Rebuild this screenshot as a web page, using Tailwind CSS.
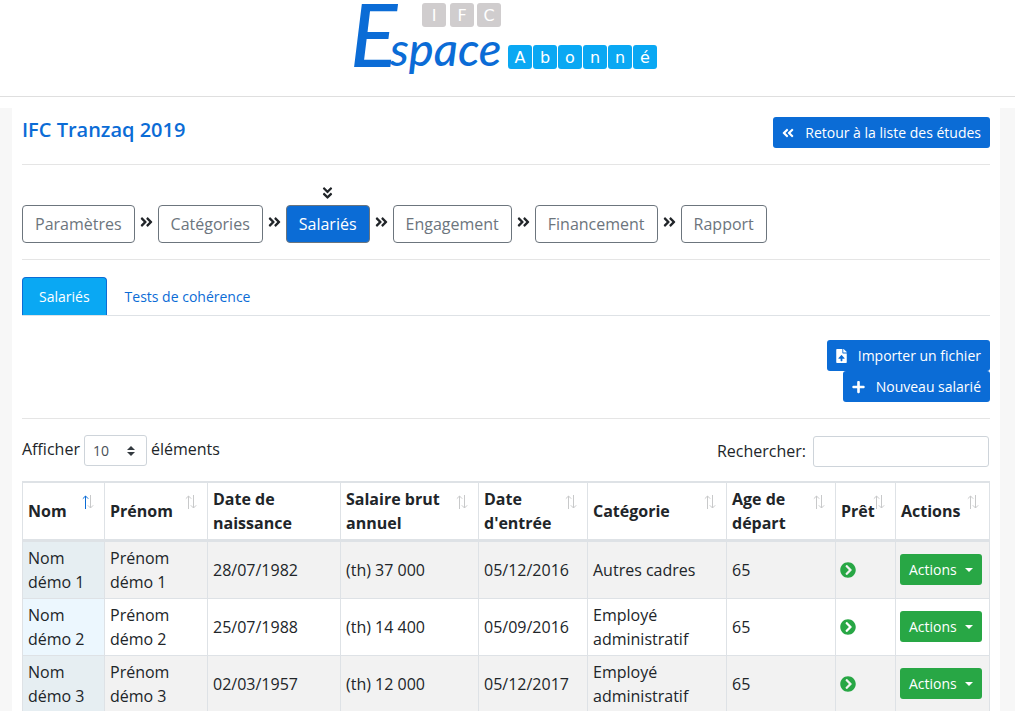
<!DOCTYPE html>
<html lang="fr">
<head>
<meta charset="utf-8">
<title>IFC Espace Abonné</title>
<script src="https://cdn.jsdelivr.net/npm/@tailwindcss/browser@4"></script>
</head>
<body class="bg-white font-['Open_Sans',sans-serif] text-base text-[#212529]">
<svg class="hidden">
  <symbol id="right" viewBox="0 0 448 512"><path d="M224.3 273l-136 136c-9.4 9.4-24.6 9.4-33.9 0l-22.6-22.6c-9.4-9.4-9.4-24.6 0-33.9l96.4-96.4-96.4-96.4c-9.4-9.4-9.4-24.6 0-33.9L54.3 103c9.4-9.4 24.6-9.4 33.9 0l136 136c9.5 9.4 9.5 24.6.1 34zm192-34l-136-136c-9.4-9.4-24.6-9.4-33.9 0l-22.6 22.6c-9.4 9.4-9.4 24.6 0 33.9l96.4 96.4-96.4 96.4c-9.4 9.4-9.4 24.6 0 33.9l22.6 22.6c9.4 9.4 24.6 9.4 33.9 0l136-136c9.4-9.2 9.4-24.4 0-33.8z"/></symbol>
  <symbol id="file" viewBox="0 0 384 512"><path d="M224 136V0H24C10.7 0 0 10.7 0 24v464c0 13.3 10.7 24 24 24h336c13.3 0 24-10.7 24-24V160H248c-13.2 0-24-10.8-24-24zm65.18 216.01H224v80c0 8.84-7.16 16-16 16h-32c-8.84 0-16-7.16-16-16v-80H94.82c-14.28 0-21.41-17.29-11.27-27.36l96.42-95.7c6.65-6.61 17.39-6.61 24.04 0l96.42 95.7c10.15 10.07 3.03 27.36-11.25 27.36zM377 105L279.1 7c-4.5-4.5-10.6-7-17-7H256v128h128v-6.1c0-6.3-2.5-12.4-7-16.9z"/></symbol>
  <symbol id="plus" viewBox="0 0 448 512"><path d="M416 208H272V64c0-17.67-14.33-32-32-32h-32c-17.67 0-32 14.33-32 32v144H32c-17.67 0-32 14.33-32 32v32c0 17.67 14.33 32 32 32h144v144c0 17.67 14.33 32 32 32h32c17.67 0 32-14.33 32-32V304h144c17.67 0 32-14.33 32-32v-32c0-17.67-14.33-32-32-32z"/></symbol>
  <symbol id="go" viewBox="0 0 512 512"><path d="M256 8c137 0 248 111 248 248S393 504 256 504 8 393 8 256 119 8 256 8zm113.9 231L234.4 103.5c-9.4-9.4-24.6-9.4-33.9 0l-17 17c-9.4 9.4-9.4 24.6 0 33.9L285.1 256 183.5 357.6c-9.4 9.4-9.4 24.6 0 33.9l17 17c9.4 9.4 24.6 9.4 33.9 0L369.9 273c9.4-9.4 9.4-24.6 0-34z"/></symbol>
  <symbol id="up" viewBox="0 0 12 14"><path d="M3.5 14V1M.8 3.7 3.5 1l2.7 2.7" fill="none" stroke="currentColor"/></symbol>
  <symbol id="down" viewBox="0 0 12 14"><path d="M8.500 0v13M5.800 10.300 8.500 13l2.700-2.700" fill="none" stroke="currentColor"/></symbol>
</svg>

<header class="flex h-[97px] justify-center border-b border-[#dfdfdf]">
  <svg class="h-24 w-[308px] overflow-visible" viewBox="0 0 308 96" role="img" aria-label="IFC Espace Abonné">
    <g fill="#0b6cd6" font-family="Lato" font-style="italic" font-weight="500">
      <text x="-4" y="67" font-size="88">E</text>
      <text x="36" y="66" font-size="47">space</text>
    </g>
    <g fill="#d0cdce">
      <rect x="68" y="3" width="24" height="24" rx="3"/><rect x="96" y="3" width="24" height="24" rx="3"/><rect x="123" y="3" width="24" height="24" rx="3"/>
    </g>
    <g fill="#0aa8f3">
      <rect x="154" y="45" width="24" height="24" rx="3"/><rect x="179" y="45" width="24" height="24" rx="3"/><rect x="204" y="45" width="24" height="24" rx="3"/><rect x="229" y="45" width="24" height="24" rx="3"/><rect x="254" y="45" width="24" height="24" rx="3"/><rect x="279" y="45" width="24" height="24" rx="3"/>
    </g>
    <g fill="#fff" font-family="DejaVu Sans" font-size="16" text-anchor="middle">
      <text x="80" y="21">I</text><text x="108" y="21">F</text><text x="135" y="21">C</text>
      <text x="166" y="63">A</text><text x="191" y="63">b</text><text x="216" y="63">o</text><text x="241" y="63">n</text><text x="266" y="63">n</text><text x="291" y="63">é</text>
    </g>
  </svg>
</header>

<div class="mt-[11px] bg-[#f7f7f7] pr-[15px] pl-3">
<main class="bg-white px-[10px] pt-[9px] pb-4">
  <div class="flex items-start justify-between border-b border-[#e5e5e5] pb-4">
    <h1 class="text-xl leading-[26px] font-semibold text-[#0b6cd6]">IFC Tranzaq 2019</h1>
    <a href="#" class="flex h-[31px] items-center gap-[11px] rounded-[3px] bg-[#0b6cd6] px-[9px] text-sm text-white"><svg class="h-3.5 w-3 rotate-180 fill-current"><use href="#right"/></svg>Retour à la liste des études</a>
  </div>

  <nav class="flex items-end gap-[5px] border-b border-[#e5e5e5] pt-5 pb-4" aria-label="Étapes">
    <button class="h-[38px] rounded border border-[#6c757d] px-3 text-[#6c757d]">Paramètres</button>
    <svg class="mb-[13px] h-4 w-[13px] fill-current"><use href="#right"/></svg>
    <button class="h-[38px] rounded border border-[#6c757d] px-3 text-[#6c757d]">Catégories</button>
    <svg class="mb-[13px] h-4 w-[13px] fill-current"><use href="#right"/></svg>
    <div class="flex flex-col items-center gap-1">
      <svg class="h-4 w-[13px] rotate-90 fill-current"><use href="#right"/></svg>
      <button class="h-[38px] rounded border border-[#6c757d] bg-[#0b6cd6] px-3 text-white" aria-current="step">Salariés</button>
    </div>
    <svg class="mb-[13px] h-4 w-[13px] fill-current"><use href="#right"/></svg>
    <button class="h-[38px] rounded border border-[#6c757d] px-3 text-[#6c757d]">Engagement</button>
    <svg class="mb-[13px] h-4 w-[13px] fill-current"><use href="#right"/></svg>
    <button class="h-[38px] rounded border border-[#6c757d] px-3 text-[#6c757d]">Financement</button>
    <svg class="mb-[13px] h-4 w-[13px] fill-current"><use href="#right"/></svg>
    <button class="h-[38px] rounded border border-[#6c757d] px-3 text-[#6c757d]">Rapport</button>
  </nav>

  <div class="mt-[17px] flex border-b border-[#dee2e6] text-sm">
    <a href="#" class="flex h-[38px] items-center rounded-t border border-b-0 border-[#0b6cd6] bg-[#0aa8f3] px-4 text-white">Salariés</a>
    <a href="#" class="flex h-[38px] items-center border-t border-transparent px-[18px] text-[#0b6cd6]">Tests de cohérence</a>
  </div>

  <div class="mt-6 flex flex-col items-end border-b border-[#e5e5e5] pb-4 text-sm text-white">
    <button class="flex h-[31px] items-center gap-[11px] rounded-[3px] bg-[#0b6cd6] px-[9px]"><svg class="h-3.5 w-[11px] fill-current"><use href="#file"/></svg>Importer un fichier</button>
    <button class="flex h-[31px] items-center gap-[11px] rounded-[3px] bg-[#0b6cd6] px-[9px]"><svg class="h-3.5 w-[13px] fill-current"><use href="#plus"/></svg>Nouveau salarié</button>
  </div>

  <div class="mt-4 flex items-start justify-between">
    <div class="flex gap-1">
      <label for="length" class="leading-7">Afficher</label>
      <span class="relative">
        <select id="length" class="h-[31px] w-[63px] appearance-none rounded-[3px] border border-[#ced4da] bg-white px-2 text-sm text-[#495057]"><option>10</option><option>25</option><option>50</option></select>
        <svg class="pointer-events-none absolute top-[11px] right-3 h-2.5 w-2 fill-[#343a40]" viewBox="0 0 8 10"><path d="M0 4 4 0l4 4zM0 6h8l-4 4z"/></svg>
      </span>
      <span class="leading-7">éléments</span>
    </div>
    <div class="flex gap-[7px] pt-px pr-px">
      <label for="search" class="leading-[30px]">Rechercher:</label>
      <input id="search" type="search" class="h-[31px] w-44 rounded-[3px] border border-[#ced4da] px-2 text-sm">
    </div>
  </div>

  <table class="mt-3.5 w-full table-fixed border-separate border-spacing-0 border-t border-r border-[#dee2e6] text-left [&_td]:h-[57px] [&_td]:border-t [&_td]:border-l [&_td]:border-[#dee2e6] [&_td]:py-1 [&_td]:pr-1 [&_td]:pl-[5px] [&_th]:relative [&_th]:h-[59px] [&_th]:border-t [&_th]:border-b-2 [&_th]:border-l [&_th]:border-[#dee2e6] [&_th]:py-1 [&_th]:pr-1 [&_th]:pl-[5px] [&_th]:font-bold [&_th_svg]:absolute [&_th_svg]:top-3 [&_th_svg]:right-[10px] [&_th_svg]:h-3.5 [&_th_svg]:w-3 [&_th_svg]:text-[#c8c9ca]">
    <colgroup><col class="w-[82px]"><col class="w-[103px]"><col class="w-[133px]"><col class="w-[138px]"><col class="w-[109px]"><col class="w-[139px]"><col class="w-[109px]"><col class="w-[60px]"><col class="w-[94px]"></colgroup>
    <thead>
      <tr>
        <th aria-sort="ascending">Nom<svg><use href="#up" class="text-[#0b6cd6]"/><use href="#down"/></svg></th>
        <th>Prénom<svg><use href="#up"/><use href="#down"/></svg></th>
        <th>Date de<br>naissance</th>
        <th>Salaire brut<br>annuel<svg><use href="#up"/><use href="#down"/></svg></th>
        <th>Date<br>d'entrée<svg><use href="#up"/><use href="#down"/></svg></th>
        <th>Catégorie<svg><use href="#up"/><use href="#down"/></svg></th>
        <th>Age de<br>départ<svg><use href="#up"/><use href="#down"/></svg></th>
        <th>Prêt<svg><use href="#up"/><use href="#down"/></svg></th>
        <th>Actions<svg><use href="#up"/><use href="#down"/></svg></th>
      </tr>
    </thead>
    <tbody>
      <tr class="bg-[#f2f2f2]">
        <td class="bg-[#e6eef2]">Nom<br>démo 1</td><td>Prénom<br>démo 1</td><td>28/07/1982</td><td>(th) 37 000</td><td>05/12/2016</td><td>Autres cadres</td><td>65</td>
        <td><svg class="-ml-px h-4 w-4 fill-[#28a745]"><use href="#go"/></svg></td>
        <td><button class="-ml-px mb-px flex h-[31px] items-center gap-2 rounded-[3px] bg-[#28a745] px-[9px] text-sm text-white">Actions<span class="border-x-4 border-t-4 border-x-transparent border-t-white"></span></button></td>
      </tr>
      <tr>
        <td class="bg-[#ecf7fe]">Nom<br>démo 2</td><td>Prénom<br>démo 2</td><td>25/07/1988</td><td>(th) 14 400</td><td>05/09/2016</td><td>Employé administratif</td><td>65</td>
        <td><svg class="-ml-px h-4 w-4 fill-[#28a745]"><use href="#go"/></svg></td>
        <td><button class="-ml-px mb-px flex h-[31px] items-center gap-2 rounded-[3px] bg-[#28a745] px-[9px] text-sm text-white">Actions<span class="border-x-4 border-t-4 border-x-transparent border-t-white"></span></button></td>
      </tr>
      <tr class="bg-[#f2f2f2]">
        <td class="bg-[#e6eef2]">Nom<br>démo 3</td><td>Prénom<br>démo 3</td><td>02/03/1957</td><td>(th) 12 000</td><td>05/12/2017</td><td>Employé administratif</td><td>65</td>
        <td><svg class="-ml-px h-4 w-4 fill-[#28a745]"><use href="#go"/></svg></td>
        <td><button class="-ml-px mb-px flex h-[31px] items-center gap-2 rounded-[3px] bg-[#28a745] px-[9px] text-sm text-white">Actions<span class="border-x-4 border-t-4 border-x-transparent border-t-white"></span></button></td>
      </tr>
    </tbody>
  </table>
</main>
</div>
</body>
</html>
